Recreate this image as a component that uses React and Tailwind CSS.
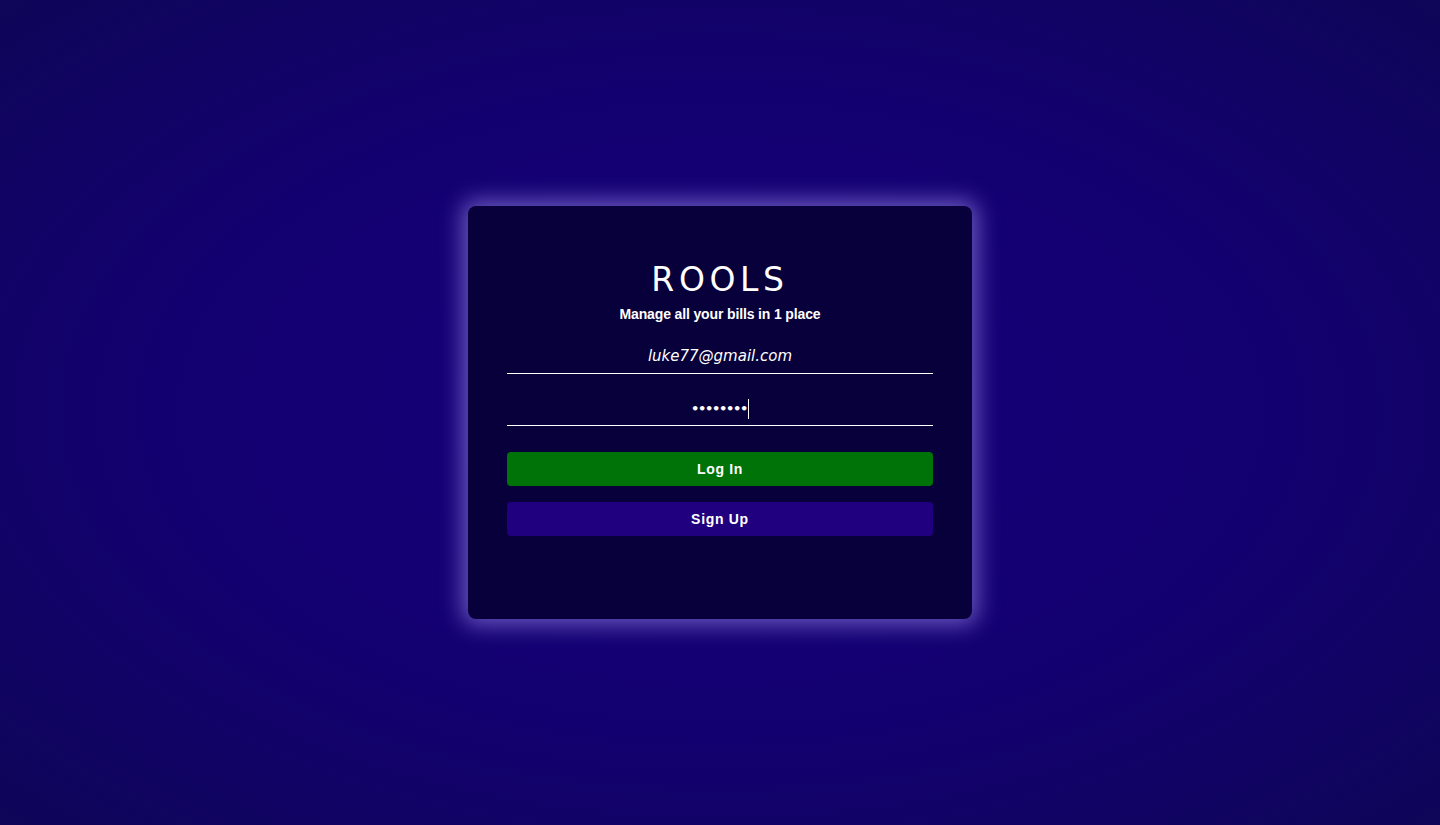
export default function App() {
  return (
    <div
      className="flex h-[825px] w-full items-center justify-center bg-[radial-gradient(ellipse_at_center,#16007a_0%,#130070_55%,#0e0658_100%)]"
      style={{ fontFamily: '"DejaVu Sans", "Liberation Sans", sans-serif' }}
    >
      <div className="flex h-[413px] w-[504px] flex-col items-center rounded-[8px] bg-[#08003a] px-[39px] pt-[54px] shadow-[0_0_22px_6px_rgba(150,130,230,0.65)]">
        <h1 className="text-[33px] font-normal leading-[40px] tracking-[0.14em] text-white">ROOLS</h1>
        <p className="mt-[6px] font-['Liberation_Sans',sans-serif] text-[14px] leading-[16px] font-bold tracking-[-0.01em] text-white">
          Manage all your bills in 1 place
        </p>

        <div className="mt-[22px] w-full border-b border-white pb-[5px] text-center">
          <span className="text-[15px] italic font-medium leading-[20px] text-white">luke77@gmail.com</span>
        </div>

        <div className="mt-[25px] flex w-full justify-center border-b border-white pb-[6px]">
          <span className="text-[13px] font-bold leading-[20px] tracking-[-0.1em] text-white">••••••••</span>
          <span className="ml-[1px] h-[20px] w-px bg-white" />
        </div>

        <button className="mt-[26px] h-[34px] w-full rounded-[4px] bg-[#007308] font-['Liberation_Sans',sans-serif] text-[14px] font-bold tracking-[0.05em] text-white">
          Log In
        </button>
        <button className="mt-[16px] h-[34px] w-full rounded-[4px] bg-[#210080] font-['Liberation_Sans',sans-serif] text-[14px] font-bold tracking-[0.05em] text-white">
          Sign Up
        </button>
      </div>
    </div>
  );
}
